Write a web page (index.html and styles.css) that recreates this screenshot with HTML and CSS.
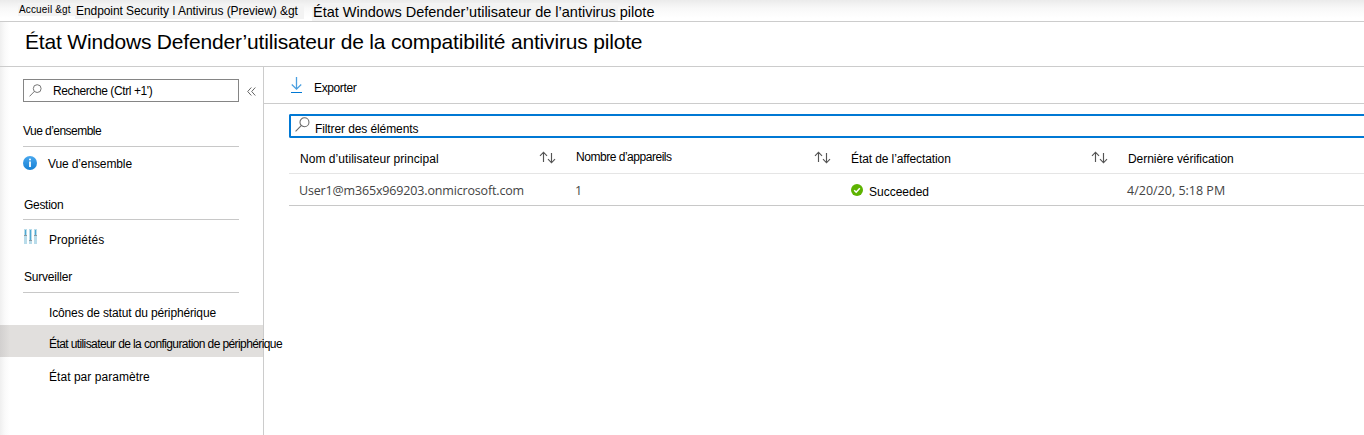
FILE: index.html
```html
<!DOCTYPE html>
<html lang="fr">
<head>
<meta charset="utf-8">
<title>Antivirus pilote</title>
<link rel="stylesheet" href="styles.css">
</head>
<body>
<header class="crumbs">
  <span class="crumb crumb-home">Accueil &amp;gt</span>
  <span class="crumb crumb-section">Endpoint Security I Antivirus (Preview) &amp;gt</span>
  <span class="crumb crumb-current">État Windows Defender’utilisateur de l’antivirus pilote</span>
</header>
<h1 class="title">État Windows Defender’utilisateur de la compatibilité antivirus pilote</h1>
<div class="body">
  <nav class="sidebar">
    <div class="search-row">
      <div class="search">
        <svg class="icon-search" width="13" height="13" viewBox="0 0 13 13"><circle cx="8.2" cy="4.6" r="3.9"/><path d="M5.4 7.4.5 12.4"/></svg>
        <span class="search-label">Recherche (Ctrl +1')</span>
      </div>
      <svg class="icon-collapse" width="9" height="9" viewBox="0 0 9 9"><path d="M4.3.5.7 4.5l3.6 4M8.3.5 4.7 4.5l3.6 4"/></svg>
    </div>
    <div class="group g-overview">Vue d’ensemble</div>
    <div class="item i-overview">
      <svg width="14" height="14" viewBox="0 0 14 14"><defs><linearGradient id="info" x1="0" y1="0" x2="0" y2="1"><stop offset="0" stop-color="#4aa8ee"/><stop offset="1" stop-color="#1580d4"/></linearGradient></defs><circle cx="7" cy="7" r="7" fill="url(#info)"/><circle cx="7" cy="3.6" r="1" fill="#fff"/><path d="M7 5.6v5.4" stroke="#fff" stroke-width="1.8"/></svg>
      <span>Vue d’ensemble</span>
    </div>
    <div class="group g-manage">Gestion</div>
    <div class="item i-properties">
      <svg width="13" height="15" viewBox="0 0 13 15"><path fill="#b9dcea" d="M0 0h3v15H0zM5 0h3v15H5zM10 0h3v15h-3z"/><path fill="#4fa9d3" d="M1 1h1v5H1zM6 1h1v10H6zM11 1h1v5h-1z"/><path fill="#8a9aa2" d="M0 6h3v1H0zM5 11h3v1H5zM10 6h3v1h-3z"/></svg>
      <span>Propriétés</span>
    </div>
    <div class="group g-monitor">Surveiller</div>
    <div class="item i-device">Icônes de statut du périphérique</div>
    <div class="item i-user">État utilisateur de la configuration de périphérique</div>
    <div class="item i-setting">État par paramètre</div>
  </nav>
  <main class="main">
    <div class="toolbar">
      <svg class="icon-export" width="12" height="17" viewBox="0 0 12 17"><path d="M5.5 0v12M.8 7.5l4.7 4.6 4.7-4.6" stroke="#4a9fe0" stroke-width="1.3"/><path d="M0 15.5h11" stroke="#0078d4"/></svg>
      <span>Exporter</span>
    </div>
    <div class="filter">
      <svg class="icon-search" width="15" height="15" viewBox="0 0 13 13"><circle cx="8.2" cy="4.6" r="3.9"/><path d="M5.4 7.4.5 12.4"/></svg>
      <span>Filtrer des éléments</span>
    </div>
    <div class="grid head">
      <div class="cell h-name"><span>Nom d’utilisateur principal</span><svg class="sort" width="17" height="13" viewBox="0 0 17 13"><path d="M4.5 11V1.2M1 4.8l3.5-3.6L8 4.8M12.5 2v9.8M9 8.2l3.5 3.6L16 8.2"/></svg></div>
      <div class="cell h-count"><span>Nombre d’appareils</span><svg class="sort" width="17" height="13" viewBox="0 0 17 13"><path d="M4.5 11V1.2M1 4.8l3.5-3.6L8 4.8M12.5 2v9.8M9 8.2l3.5 3.6L16 8.2"/></svg></div>
      <div class="cell h-state"><span>État de l’affectation</span><svg class="sort" width="17" height="13" viewBox="0 0 17 13"><path d="M4.5 11V1.2M1 4.8l3.5-3.6L8 4.8M12.5 2v9.8M9 8.2l3.5 3.6L16 8.2"/></svg></div>
      <div class="cell h-date"><span>Dernière vérification</span></div>
    </div>
    <div class="grid row">
      <div class="cell r-name">User1@m365x969203.onmicrosoft.com</div>
      <div class="cell r-count">1</div>
      <div class="cell r-state"><svg width="12" height="12" viewBox="0 0 12 12"><circle cx="6" cy="6" r="6" fill="#5db300"/><path d="M3.2 6.2l2 2 3.6-4" stroke="#fff" stroke-width="1.5"/></svg><span>Succeeded</span></div>
      <div class="cell r-date">4/20/20, 5:18 PM</div>
    </div>
  </main>
</div>
</body>
</html>
```
FILE: styles.css
```css
* { box-sizing: border-box; }
body {
  margin: 0;
  height: 435px;
  overflow: hidden;
  font: 12px/16px "Liberation Sans", Arial, sans-serif;
  color: #000;
  white-space: nowrap;
  background: linear-gradient(90deg, #efefef 0, #fafafa 5px, #fff 10px);
}
svg { display: block; flex: none; fill: none; stroke: none; }

.crumbs {
  display: flex;
  align-items: flex-start;
  height: 22px;
  padding-left: 18px;
  border-bottom: 1px solid #ccc;
  background: linear-gradient(180deg, #ebebeb 0, #f8f8f8 8px, #fff 18px);
}
.crumb { background: #f3f3f3; }
.crumb-home { width: 57px; margin-top: 3px; font-size: 10px; line-height: 13px; letter-spacing: 0.15px; padding-left: 1px; }
.crumb-section { width: 229px; margin-top: 4px; padding-left: 1px; letter-spacing: -0.07px; line-height: 15px; }
.crumb-current { margin: 3px 0 0 8px; padding: 1px 0 0 1px; font-size: 14.5px; line-height: 17px; background: linear-gradient(90deg, #f3f3f3 306px, transparent 306px); }

.title {
  height: 45px;
  margin: 0;
  padding: 8px 0 0 25px;
  border-bottom: 1px solid #ccc;
  font-size: 21px;
  line-height: 24px;
  font-weight: 400;
  letter-spacing: -0.18px;
}

.body { display: flex; height: 368px; }
.sidebar { width: 264px; flex: none; border-right: 1px solid #ccc; }
.main { flex: 1; min-width: 0; }

.search-row { display: flex; align-items: center; gap: 8px; padding: 12px 0 0 23px; }
.search { display: flex; width: 216px; height: 23px; padding: 4px 0 0 5px; border: 1px solid #858585; background: #fff; }
.search-label { margin: -1px 0 0 11px; letter-spacing: -0.4px; }
.icon-search { stroke: #666; stroke-width: 0.9; }
.icon-collapse { margin-top: 2px; stroke: #666; }

.group { margin: 0 24px 0 23px; border-bottom: 1px solid #c8c8c8; }
.g-overview { height: 24px; margin-top: 21px; letter-spacing: -0.54px; }
.g-manage { height: 23px; margin-top: 23px; padding-left: 1px; letter-spacing: -0.3px; }
.g-monitor { height: 24px; margin-top: 20px; padding-left: 1px; letter-spacing: -0.2px; }

.item { display: flex; padding-left: 49px; }
.i-overview { height: 27px; padding: 9px 0 0 23px; gap: 11px; letter-spacing: -0.12px; }
.i-properties { height: 29px; padding: 9px 0 0 24px; gap: 12px; letter-spacing: 0.05px; }
.i-properties span { padding-top: 3px; }
.i-device { height: 32px; padding-top: 12px; letter-spacing: -0.14px; }
.i-user { height: 32px; padding-top: 11px; letter-spacing: -0.6px; background: linear-gradient(90deg, #d2d0cf, #e1dfdd 10px); }
.i-setting { padding-top: 12px; letter-spacing: 0.04px; }

.toolbar { display: flex; height: 37px; padding: 10px 0 0 27px; gap: 11px; border-bottom: 1px solid #ccc; letter-spacing: -0.37px; }
.toolbar span { padding-top: 3px; }
.filter { display: flex; height: 24px; margin: 10px 0 0 25px; padding: 1px 0 0 4px; gap: 5px; border: 2px solid #0078d4; border-right: 0; border-radius: 2px 0 0 2px; letter-spacing: -0.1px; }
.filter span { padding-top: 4px; }

.grid { display: grid; grid-template-columns: 277px 275px 277px 1fr; margin-left: 25px; padding-left: 10px; }
.cell { display: flex; }
.head { height: 36px; border-bottom: 1px solid #e5e5e5; }
.head span { padding-top: 13px; }
.h-name { padding-left: 1px; letter-spacing: 0.05px; }
.h-count { letter-spacing: -0.47px; }
.head .h-count span { padding-top: 11px; }
.h-state { letter-spacing: -0.1px; }
.h-date { letter-spacing: -0.05px; }
.sort { margin: 13px 20px 0 auto; stroke: #555; stroke-width: 1.15; }
.row { height: 32px; border-bottom: 1px solid #c8c8c8; padding-top: 9px; font-family: "Open Sans", sans-serif; font-size: 12.5px; color: #444; }
.r-name { letter-spacing: -0.16px; }
.r-count, .r-date { margin-left: -1px; }
.r-state { gap: 6px; font: 12px/16px "Liberation Sans", Arial, sans-serif; color: #000; }
.r-state svg { margin-top: 1px; }
.r-state span { padding-top: 1px; }
```
